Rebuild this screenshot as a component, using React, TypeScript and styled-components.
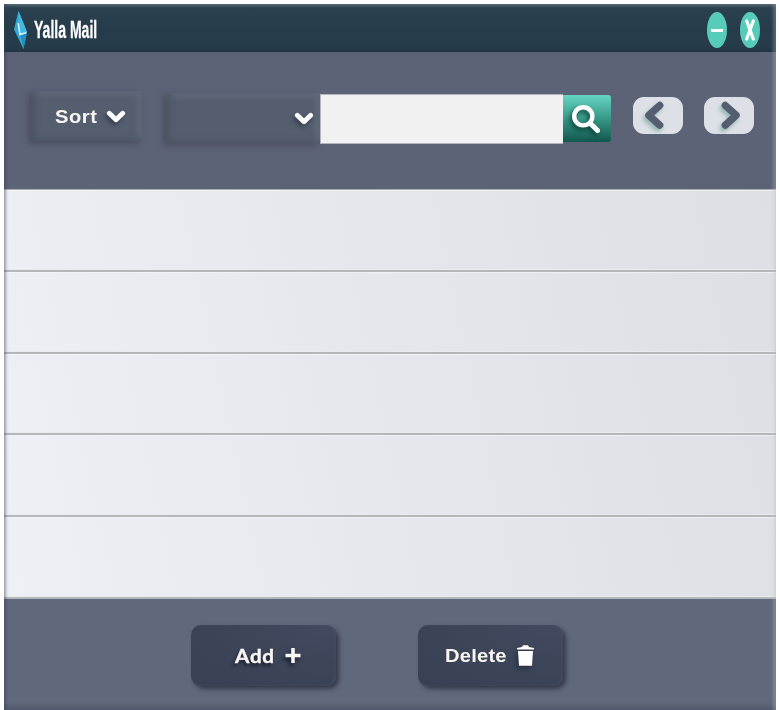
import React from "react";
import styled, { createGlobalStyle } from "styled-components";

const GlobalStyle = createGlobalStyle`
  * { box-sizing: border-box; }
  html, body { margin: 0; background: #fff; overflow: hidden; }
  button, select, input { font: inherit; border: 0; padding: 0; margin: 0; }
  svg { display: block; flex: none; overflow: visible; }
`;

const Window = styled.main`
  position: relative;
  width: 772px;
  height: 706px;
  margin: 4px 0 0 4px;
  display: grid;
  grid-template-rows: 48px 137px 410px 111px;
  font-family: "Liberation Sans", Arial, sans-serif;
  &::after {
    content: "";
    position: absolute;
    inset: 0;
    pointer-events: none;
    box-shadow: inset 4px 0 3px -2px rgba(55, 65, 78, 0.42),
      inset -4px 0 3px -1px rgba(190, 202, 214, 0.3),
      inset 0 4px 3px -2px rgba(150, 165, 178, 0.4),
      inset 0 -5px 4px -2px rgba(50, 58, 78, 0.4);
  }
`;

const TitleBar = styled.header`
  display: flex;
  align-items: center;
  padding: 4px 16px 0 10px;
  background: linear-gradient(#2c4250, #263c4a 50%, #263c4b 88%, #223644);
`;

const Title = styled.h1`
  margin: 0 0 0 7px;
  width: 64px;
  color: #fff;
  font-size: 24px;
  line-height: 28px;
  font-weight: 700;
  white-space: nowrap;
  -webkit-text-stroke: 0.3px #fff;
  transform: scaleX(0.585);
  transform-origin: left center;
`;

const WindowControls = styled.div`
  display: flex;
  gap: 13px;
  margin-left: auto;
`;

const ControlButton = styled.button`
  display: grid;
  place-items: center;
  width: 20px;
  height: 36px;
  border-radius: 50%;
  background: #58ccba;
`;

const Toolbar = styled.section`
  display: flex;
  align-items: flex-start;
  padding: 39px 22px 0 27px;
  background: #5c6377;
`;

const InsetButton = styled.button<{ $width: number; $height: number }>`
  display: flex;
  align-items: center;
  width: ${(p) => p.$width}px;
  height: ${(p) => p.$height}px;
  background: #555e6f;
  box-shadow: -3px 2px 5px rgba(66, 67, 86, 0.6),
    inset 5px -4px 5px rgba(70, 77, 92, 0.45),
    inset -5px 5px 5px rgba(104, 114, 132, 0.5);
`;

const SortButton = styled(InsetButton)`
  padding: 0 17px 0 24px;
  justify-content: space-between;
`;

const Category = styled(InsetButton)`
  justify-content: flex-end;
  margin: 2px 0 0 24px;
  padding: 1px 7px 0 0;
`;

const Label = styled.span<{ $face?: string; $size?: number; $spacing?: number; $stroke?: number; $shadow?: boolean }>`
  color: #f8f6f2;
  font-family: ${(p) => p.$face ?? '"Liberation Sans"'}, sans-serif;
  font-size: ${(p) => p.$size ?? 19}px;
  line-height: 24px;
  font-weight: 700;
  letter-spacing: ${(p) => p.$spacing ?? 0}px;
  -webkit-text-stroke: ${(p) => p.$stroke ?? 0}px #f8f6f2;
  text-shadow: ${(p) => (p.$shadow ? "-2px 3px 3px rgba(18, 24, 36, .8)" : "none")};
  transform: scaleX(1.06);
  transform-origin: left center;
`;

const SearchField = styled.input`
  width: 243px;
  height: 50px;
  margin-top: 3px;
  padding: 0 10px;
  border: 1px solid #b2b5bf;
  border-right: 0;
  border-radius: 0;
  background: #f1f1f1;
  outline: none;
`;

const SearchButton = styled.button`
  display: grid;
  place-items: center;
  width: 48px;
  height: 47px;
  margin-top: 4px;
  padding-right: 2px;
  border-radius: 0 3px 3px 0;
  background: linear-gradient(#66d6c3, #389886 50%, #12574f);
`;

const Pager = styled.div`
  display: flex;
  gap: 21px;
  margin: 6px 0 0 auto;
`;

const PageButton = styled.button`
  display: grid;
  place-items: center;
  width: 50px;
  height: 37px;
  border-radius: 11px;
  background: #dde1e7;
`;

const MailList = styled.ul`
  list-style: none;
  display: grid;
  grid-template-rows: repeat(5, 1fr);
  margin: 0;
  padding: 0;
  border-top: 1px solid #a9adb0;
  background: linear-gradient(78deg, #edf0f4 0%, #e5e8ec 45%, #dce0e4 100%);
`;

const MailRow = styled.li`
  border-bottom: 2px solid #b3b7b9;
  box-shadow: inset 0 1px rgba(246, 248, 249, 0.65), inset 0 -1px #e9ecef;
`;

const Footer = styled.footer`
  display: flex;
  align-items: flex-start;
  gap: 82px;
  padding: 26px 0 0 187px;
  background: #60687c;
`;

const ActionButton = styled.button<{ $inset: number; $gap: number }>`
  display: flex;
  align-items: center;
  gap: ${(p) => p.$gap}px;
  width: 145px;
  height: 61px;
  padding-left: ${(p) => p.$inset}px;
  border-radius: 10px;
  background: radial-gradient(ellipse at 100% 0, #444a60, #3d4559 45%, #384053 100%);
  box-shadow: 3px 3px 4px rgba(46, 50, 66, 0.85), inset -2px 0 3px rgba(72, 77, 98, 0.6);
`;

const Icon = styled.svg<{ $shadow?: string }>`
  fill: none;
  stroke: #fff;
  stroke-linecap: round;
  stroke-linejoin: round;
  filter: ${(p) => (p.$shadow ? `drop-shadow(-2px 3px 2px ${p.$shadow})` : "none")};
`;

const Logo = () => (
  <svg width="13" height="38" viewBox="0 0 13 38">
    <path d="M4.5 0 13 21 9.5 38 0 18.5Z" fill="#31aad5" />
    <path d="M4.5 0 13 21 6.5 25Z" fill="#42b9e2" />
    <path d="M6.5 25 13 21 9.5 38Z" fill="#278fc0" />
    <path d="M4.2 12 6 23.5 12.4 21.6" fill="none" stroke="#e9f7fa" strokeWidth="1.5" />
  </svg>
);

const ChevronDown = () => (
  <Icon width="18" height="12" viewBox="0 0 18 12" strokeWidth="4.8" $shadow="rgba(40,47,60,.65)">
    <path d="M2.3 2.3 9 8.8 15.7 2.3" />
  </Icon>
);

const PageChevron = ({ next = false }: { next?: boolean }) => (
  <Icon width="50" height="37" viewBox="0 0 50 37" strokeWidth="7.2" $shadow="rgba(90,145,137,.55)">
    <path d={next ? "M21.2 8.4 32.2 18.3 21.2 28.2" : "M26.8 8.4 15.8 18.3 26.8 28.2"} stroke="#555e70" />
  </Icon>
);

export default function App() {
  return (
    <>
      <GlobalStyle />
      <Window>
        <TitleBar>
          <Logo />
          <Title>Yalla Mail</Title>
          <WindowControls>
            <ControlButton aria-label="Minimize">
              <Icon width="12" height="3" viewBox="0 0 12 3"><path d="M0 1.5H12" strokeWidth="3" strokeLinecap="butt" /></Icon>
            </ControlButton>
            <ControlButton aria-label="Close">
              <Icon width="10" height="22" viewBox="0 0 10 22" strokeWidth="3.2"><path d="M1.7 2 8.3 20M8.3 2 1.7 20" /></Icon>
            </ControlButton>
          </WindowControls>
        </TitleBar>
        <Toolbar>
          <SortButton $width={111} $height={51}>
            <Label $spacing={0.5}>Sort</Label>
            <ChevronDown />
          </SortButton>
          <Category $width={154} $height={51} aria-label="Category">
            <ChevronDown />
          </Category>
          <SearchField aria-label="Search mail" />
          <SearchButton aria-label="Search">
            <Icon width="28" height="28" viewBox="0 0 28 28" $shadow="rgba(5,55,48,.75)">
              <circle cx="11.3" cy="11.3" r="9.1" strokeWidth="4.4" />
              <path d="m18.5 18.5 7 7" strokeWidth="5" />
            </Icon>
          </SearchButton>
          <Pager>
            <PageButton aria-label="Previous"><PageChevron /></PageButton>
            <PageButton aria-label="Next"><PageChevron next /></PageButton>
          </Pager>
        </Toolbar>
        <MailList>
          {[1, 2, 3, 4, 5].map((row) => <MailRow key={row} />)}
        </MailList>
        <Footer>
          <ActionButton $inset={44} $gap={12}>
            <Label $face="Lato" $size={19.5} $spacing={0.7} $stroke={0.4} $shadow>Add</Label>
            <Icon width="16" height="16" viewBox="0 0 16 16" $shadow="rgba(18,24,36,.9)">
              <path d="M8 0V15M.5 7.5H15.5" stroke="#f8f6f2" strokeWidth="3.6" strokeLinecap="butt" />
            </Icon>
          </ActionButton>
          <ActionButton $inset={27} $gap={14}>
            <Label $spacing={0.2}>Delete</Label>
            <Icon width="17" height="21" viewBox="0 0 17 21" $shadow="rgba(18,24,36,.45)">
              <path d="M0 4.5V3L5 2 6 .3H11L12 2 17 3V4.5Z" fill="#fff" stroke="none" />
              <path d="M1 6H16L15 20.8H2Z" fill="#fff" stroke="none" />
            </Icon>
          </ActionButton>
        </Footer>
      </Window>
    </>
  );
}
